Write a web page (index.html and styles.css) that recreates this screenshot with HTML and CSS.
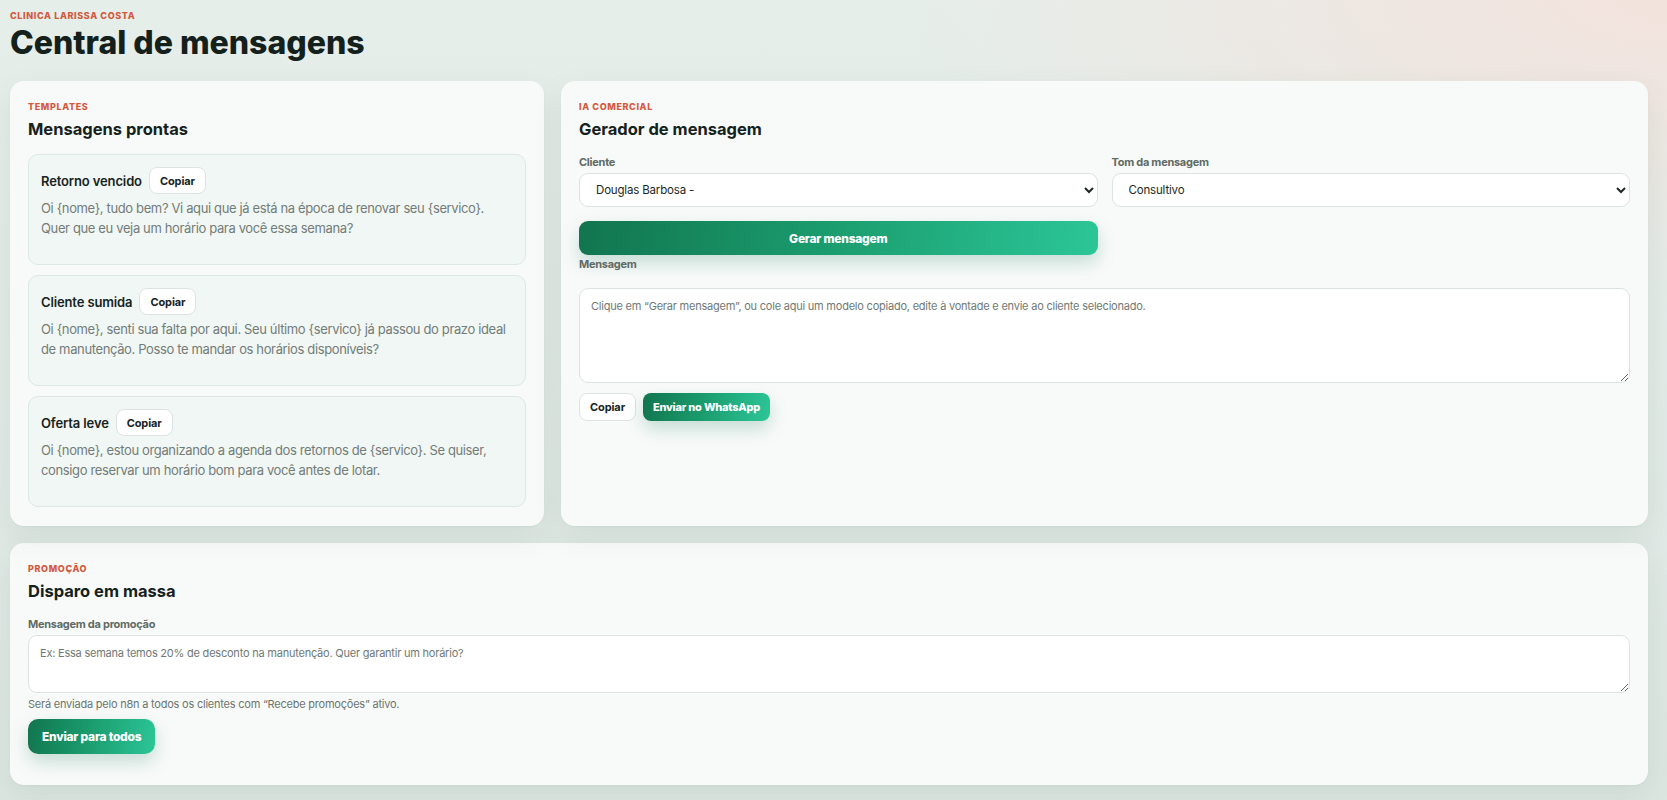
FILE: index.html
```html
<!DOCTYPE html>
<html lang="pt-BR">
<head>
<meta charset="utf-8">
<title>Central de mensagens</title>
<link rel="stylesheet" href="styles.css">
</head>
<body>
<main class="page">
  <header class="page-header">
    <p class="eyebrow">Clinica Larissa Costa</p>
    <h1 class="page-title">Central de mensagens</h1>
  </header>

  <div class="top-grid">
    <section class="card">
      <p class="eyebrow">Templates</p>
      <h2 class="card-title">Mensagens prontas</h2>
      <div class="template-list">
        <article class="template">
          <div class="template-head">
            <h3 class="template-name">Retorno vencido</h3>
            <button class="btn btn-ghost btn-sm" type="button">Copiar</button>
          </div>
          <p class="template-text">Oi {nome}, tudo bem? Vi aqui que já está na época de renovar seu {servico}. Quer que eu veja um horário para você essa semana?</p>
        </article>
        <article class="template">
          <div class="template-head">
            <h3 class="template-name">Cliente sumida</h3>
            <button class="btn btn-ghost btn-sm" type="button">Copiar</button>
          </div>
          <p class="template-text">Oi {nome}, senti sua falta por aqui. Seu último {servico} já passou do prazo ideal de manutenção. Posso te mandar os horários disponíveis?</p>
        </article>
        <article class="template">
          <div class="template-head">
            <h3 class="template-name">Oferta leve</h3>
            <button class="btn btn-ghost btn-sm" type="button">Copiar</button>
          </div>
          <p class="template-text">Oi {nome}, estou organizando a agenda dos retornos de {servico}. Se quiser, consigo reservar um horário bom para você antes de lotar.</p>
        </article>
      </div>
    </section>

    <section class="card">
      <p class="eyebrow">IA comercial</p>
      <h2 class="card-title">Gerador de mensagem</h2>
      <div class="form-grid">
        <label class="field">
          <span class="field-label">Cliente</span>
          <select class="input select">
            <option>Douglas Barbosa -</option>
          </select>
        </label>
        <label class="field">
          <span class="field-label">Tom da mensagem</span>
          <select class="input select">
            <option>Consultivo</option>
          </select>
        </label>
        <button class="btn btn-primary btn-wide" type="button">Gerar mensagem</button>
      </div>
      <label class="field-label msg-label" for="msg">Mensagem</label>
      <textarea id="msg" class="input textarea textarea-lg" placeholder="Clique em “Gerar mensagem”, ou cole aqui um modelo copiado, edite à vontade e envie ao cliente selecionado."></textarea>
      <div class="actions">
        <button class="btn btn-ghost btn-md" type="button">Copiar</button>
        <button class="btn btn-primary btn-md" type="button">Enviar no WhatsApp</button>
      </div>
    </section>
  </div>

  <section class="card promo">
    <p class="eyebrow">Promoção</p>
    <h2 class="card-title">Disparo em massa</h2>
    <label class="field-label" for="promo">Mensagem da promoção</label>
    <textarea id="promo" class="input textarea textarea-sm" placeholder="Ex: Essa semana temos 20% de desconto na manutenção. Quer garantir um horário?"></textarea>
    <p class="hint">Será enviada pelo n8n a todos os clientes com “Recebe promoções” ativo.</p>
    <button class="btn btn-primary btn-lg" type="button">Enviar para todos</button>
  </section>
</main>
</body>
</html>
```

FILE: styles.css
```css
* {
  box-sizing: border-box;
}

html, body {
  margin: 0;
  height: 100%;
}

body {
  font-family: "Inter", "Noto Sans", "Liberation Sans", sans-serif;
  color: #15211c;
  background:
    radial-gradient(ellipse 760px 300px at 100% 0%, rgba(244, 226, 220, 0.95), rgba(244, 226, 220, 0) 100%),
    linear-gradient(180deg, #e6eeea 0%, #e1eae6 60%, #dce6e1 100%);
  overflow: hidden;
}

.page {
  padding: 10px 19px 16px 10px;
}

.eyebrow {
  margin: 0;
  font-size: 9px;
  line-height: 12px;
  font-weight: 800;
  letter-spacing: 0.07em;
  text-transform: uppercase;
  color: #d4583c;
}

.page-title {
  margin: 2px 0 0;
  font-size: 32px;
  line-height: 37px;
  font-weight: 800;
  letter-spacing: 0;
  color: #13201b;
}

.page-header {
  margin-bottom: 20px;
}

.top-grid {
  display: grid;
  grid-template-columns: minmax(0, 534fr) minmax(0, 1087fr);
  gap: 17px;
  margin-bottom: 17px;
}

.card {
  background: #f8faf9;
  border-radius: 14px;
  padding: 20px 18px 19px;
  box-shadow: 0 10px 30px rgba(40, 80, 60, 0.09), 0 1px 2px rgba(40, 80, 60, 0.04);
}

.card-title {
  margin: 6px 0 0;
  font-size: 16.5px;
  line-height: 20px;
  font-weight: 700;
  letter-spacing: 0;
  color: #15211c;
}

.template-list {
  margin-top: 15px;
  display: flex;
  flex-direction: column;
  gap: 10px;
}

.template {
  background: #f1f7f4;
  border: 1px solid #dce8e2;
  border-radius: 10px;
  padding: 12px 12px 11px;
}

.template-head {
  display: flex;
  align-items: center;
  gap: 7px;
}

.template-name {
  margin: 0;
  font-size: 13px;
  line-height: 18px;
  font-weight: 600;
  letter-spacing: -0.01em;
  color: #17231e;
}

.template-text {
  margin: 4px 0 15px;
  font-size: 13px;
  line-height: 20px;
  letter-spacing: -0.028em;
  color: #737c78;
}

.btn {
  font-family: inherit;
  border: none;
  cursor: pointer;
  font-weight: 700;
  letter-spacing: -0.01em;
  white-space: nowrap;
}

.btn-ghost {
  background: #ffffff;
  border: 1px solid #dde4e0;
  color: #17231e;
  border-radius: 8px;
}

.btn-sm {
  height: 27px;
  padding: 0 10px;
  font-size: 11px;
}

.btn-md {
  height: 28px;
  padding: 0 10px;
  font-size: 11px;
  border-radius: 8px;
}

.btn-primary {
  color: #ffffff;
  font-weight: 800;
  letter-spacing: -0.02em;
  background: linear-gradient(100deg, #12754f 0%, #1a9a6c 45%, #2cc697 100%);
  box-shadow: 0 8px 18px rgba(20, 120, 85, 0.22);
}

.btn-wide {
  grid-column: 1;
  height: 34px;
  border-radius: 9px;
  font-size: 12px;
}

.btn-lg {
  display: block;
  height: 35px;
  padding: 0 14px;
  border-radius: 10px;
  font-size: 12px;
  margin: 8px 0 12px;
}

.form-grid {
  margin-top: 16px;
  display: grid;
  grid-template-columns: 1fr 1fr;
  column-gap: 14px;
  row-gap: 14px;
}

.field {
  display: flex;
  flex-direction: column;
}

.field-label {
  display: block;
  font-size: 11px;
  line-height: 14px;
  font-weight: 700;
  letter-spacing: -0.025em;
  color: #5f6a65;
  margin-bottom: 4px;
}

.msg-label {
  margin: 2px 0 17px;
}

.promo .field-label {
  margin-top: 16px;
}

.input {
  font-family: inherit;
  background: #ffffff;
  border: 1px solid #dde3e0;
  border-radius: 9px;
  color: #1d2823;
  width: 100%;
}

.select {
  height: 34px;
  padding: 0 10px 0 12px;
  font-size: 11.5px;
  letter-spacing: -0.015em;
}

.textarea {
  display: block;
  padding: 10px 11px;
  font-size: 11px;
  line-height: 14px;
  letter-spacing: -0.02em;
  resize: vertical;
}

.textarea::placeholder {
  color: #6f7974;
}

.textarea-lg {
  height: 95px;
}

.textarea-sm {
  height: 58px;
}

.actions {
  margin-top: 10px;
  display: flex;
  gap: 7px;
}

.hint {
  margin: 4px 0 0;
  font-size: 11px;
  line-height: 14px;
  letter-spacing: -0.02em;
  color: #6b7570;
}
```
